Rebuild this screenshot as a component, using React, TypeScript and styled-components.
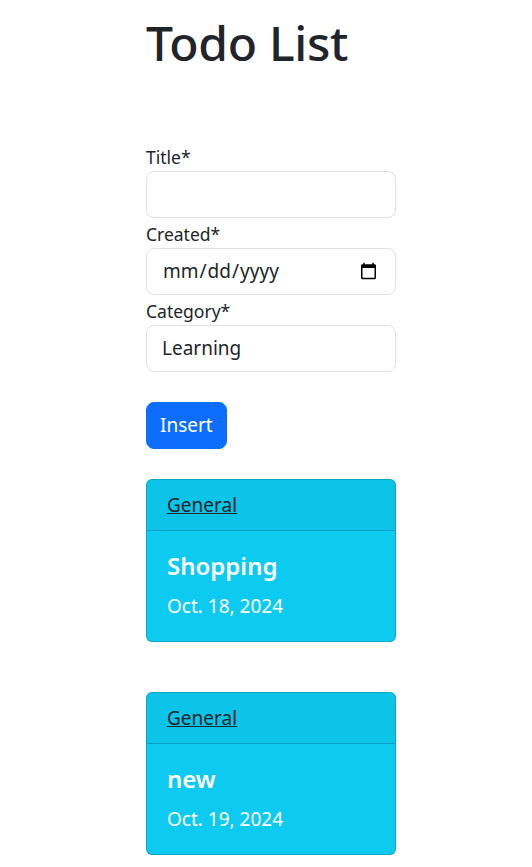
import React from 'react'
import styled, { createGlobalStyle } from 'styled-components';

const GlobalStyle = createGlobalStyle`
  body {
    margin: 0;
    font-family: "Noto Sans", "Open Sans", sans-serif;
    color: #212529;
    background: #fff;
  }
`;

type Todo = { id: number; category: string; title: string; created: string };

const todos: Todo[] = [
  { id: 1, category: 'General', title: 'Shopping', created: 'Oct. 18, 2024' },
  { id: 2, category: 'General', title: 'new', created: 'Oct. 19, 2024' },
];

const App = () => {
  return (
    <>
      <GlobalStyle />
      <Page>
        <Heading>Todo List</Heading>
        <Form onSubmit={(e) => e.preventDefault()}>
          <Label htmlFor="title">Title*</Label>
          <Field id="title" type="text" />
          <Label htmlFor="created">Created*</Label>
          <Field id="created" type="date" />
          <Label htmlFor="category">Category*</Label>
          <SelectField id="category" defaultValue="Learning">
            <option>Learning</option>
            <option>General</option>
          </SelectField>
          <InsertButton type="submit">Insert</InsertButton>
        </Form>
        <List>
          {todos.map((todo) => (
            <Card key={todo.id}>
              <CardHeader>
                <CategoryLink href="#">{todo.category}</CategoryLink>
              </CardHeader>
              <CardBody>
                <CardTitle>{todo.title}</CardTitle>
                <CardDate>{todo.created}</CardDate>
              </CardBody>
            </Card>
          ))}
        </List>
      </Page>
    </>
  )
}

const Page = styled.main`
  width: 250px;
  padding-left: 146px;
  padding-top: 1px;
`;

const Heading = styled.h1`
  margin: 13px 0 69px;
  font-size: 48px;
  font-weight: 500;
  line-height: 1.2;
  letter-spacing: -0.3px;
`;

const Form = styled.form`
  display: flex;
  flex-direction: column;
`;

const Label = styled.label`
  font-size: 17.5px;
  line-height: 24px;
  padding: 4px 0 2px;
`;

const Field = styled.input`
  box-sizing: border-box;
  width: 100%;
  height: 47px;
  padding: 8px 15px;
  font-family: inherit;
  font-size: 19px;
  color: #212529;
  background: #fff;
  border: 1px solid #dee2e6;
  border-radius: 8px;
  outline: none;
`;

const SelectField = styled.select`
  box-sizing: border-box;
  width: 100%;
  height: 47px;
  padding: 8px 15px;
  font-family: inherit;
  font-size: 19px;
  color: #212529;
  background: #fff;
  border: 1px solid #dee2e6;
  border-radius: 8px;
  appearance: none;
  outline: none;
`;

const InsertButton = styled.button`
  align-self: flex-start;
  margin-top: 30px;
  height: 47px;
  padding: 0 13px;
  font-family: inherit;
  font-size: 19px;
  color: #fff;
  background: #0d6efd;
  border: 1px solid #0d6efd;
  border-radius: 8px;
`;

const List = styled.section`
  display: flex;
  flex-direction: column;
  gap: 50px;
  margin-top: 30px;
`;

const Card = styled.article`
  background: #0dcaf0;
  border: 1px solid rgba(0, 0, 0, 0.175);
  border-radius: 6px;
  overflow: hidden;
  color: #fff;
`;

const CardHeader = styled.div`
  padding: 10px 20px;
  background: rgba(0, 0, 0, 0.03);
  border-bottom: 1px solid rgba(0, 0, 0, 0.175);
`;

const CategoryLink = styled.a`
  font-size: 19px;
  line-height: 30px;
  color: #212529;
  text-decoration: underline;
`;

const CardBody = styled.div`
  padding: 20px;
`;

const CardTitle = styled.h5`
  margin: 0 0 11px;
  font-size: 24px;
  font-weight: 600;
  line-height: 29px;
`;

const CardDate = styled.p`
  margin: 0;
  font-size: 19px;
  line-height: 30px;
`;

export default App
